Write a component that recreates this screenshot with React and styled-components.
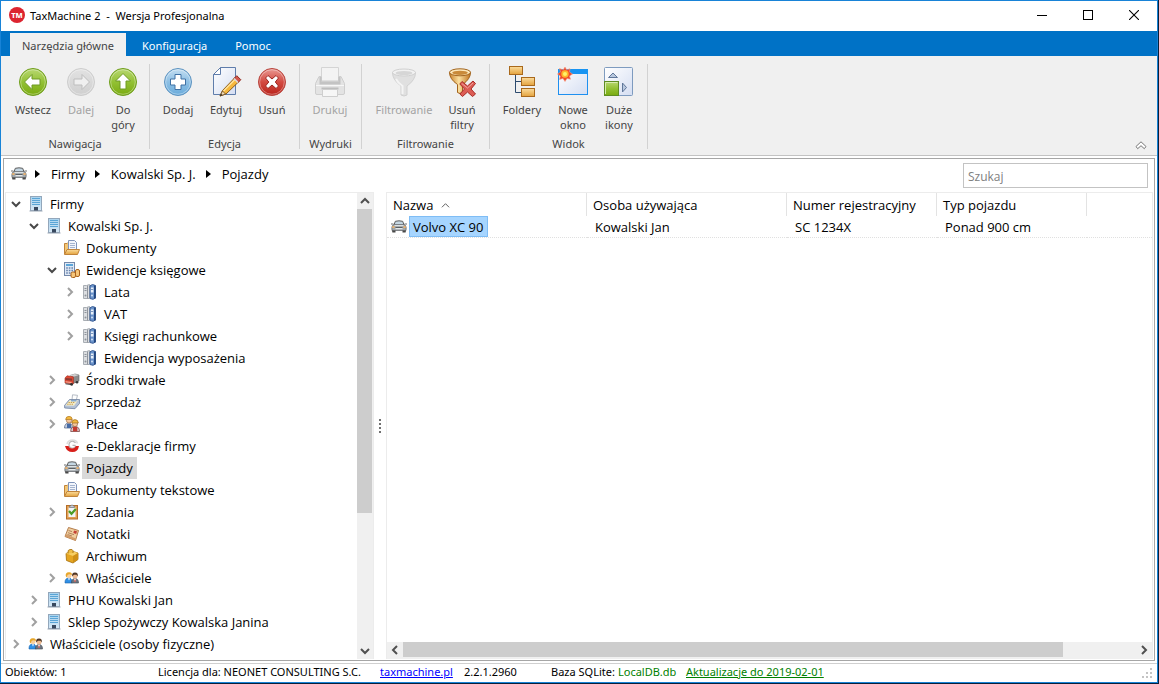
import React, { useState } from 'react'
import styled, { createGlobalStyle } from 'styled-components'

/* ---------- large ribbon icons ---------- */

const IconDefs = () => (
    <DefsSvg aria-hidden="true">
        <defs>
            <linearGradient id="green" x1="0" y1="0" x2="0" y2="1">
                <stop offset="0" stopColor="#b9d873" /><stop offset=".5" stopColor="#93c134" /><stop offset="1" stopColor="#79aa10" />
            </linearGradient>
            <linearGradient id="gray" x1="0" y1="0" x2="0" y2="1">
                <stop offset="0" stopColor="#e2e2e2" /><stop offset="1" stopColor="#cfcfcf" />
            </linearGradient>
            <linearGradient id="blue" x1="0" y1="0" x2="0" y2="1">
                <stop offset="0" stopColor="#c4def1" /><stop offset=".5" stopColor="#8dbfe4" /><stop offset="1" stopColor="#69abdb" />
            </linearGradient>
            <linearGradient id="red" x1="0" y1="0" x2="0" y2="1">
                <stop offset="0" stopColor="#ea9a93" /><stop offset=".5" stopColor="#d34a41" /><stop offset="1" stopColor="#b9231b" />
            </linearGradient>
            <linearGradient id="paper" x1="0" y1="0" x2="1" y2="1">
                <stop offset="0" stopColor="#ffffff" /><stop offset="1" stopColor="#d5def2" />
            </linearGradient>
            <linearGradient id="gold" x1="0" y1="0" x2="1" y2="0">
                <stop offset="0" stopColor="#c9822c" /><stop offset=".45" stopColor="#fbe0a0" /><stop offset="1" stopColor="#c17420" />
            </linearGradient>
            <linearGradient id="box" x1="0" y1="0" x2="0" y2="1">
                <stop offset="0" stopColor="#fbdc9c" /><stop offset="1" stopColor="#e3a23d" />
            </linearGradient>
            <linearGradient id="tower" x1="0" y1="0" x2="0" y2="1">
                <stop offset="0" stopColor="#a9d3ef" /><stop offset="1" stopColor="#d7e8f5" />
            </linearGradient>
        </defs>
    </DefsSvg>
)

const Ball = ({ fill, edge, children }) => (
    <svg width="32" height="32" viewBox="0 0 32 32">
        <circle cx="16" cy="16" r="13.5" fill={`url(#${fill})`} stroke={edge} />
        <circle cx="16" cy="16" r="12.3" fill="none" stroke="#fff" strokeOpacity=".35" />
        {children}
    </svg>
)

const arrowPath = 'M7.5 16 L15 8.5 V13 H23 V19 H15 V23.5 Z'

const BackIcon = () => <Ball fill="green" edge="#6f9e1c"><path d={arrowPath} fill="#fff" stroke="#6f9a25" /></Ball>
const ForwardIcon = () => <Ball fill="gray" edge="#cdcdcd"><path d={arrowPath} transform="rotate(180 16 16)" fill="#efefef" stroke="#bdbdbd" /></Ball>
const UpIcon = () => <Ball fill="green" edge="#6f9e1c"><path d={arrowPath} transform="rotate(90 16 16)" fill="#fff" stroke="#6f9a25" /></Ball>
const AddIcon = () => (
    <Ball fill="blue" edge="#5d93c0">
        <path d="M13 8.500 H19 V13 H23.500 V19 H19 V23.500 H13 V19 H8.500 V13 H13 Z" fill="#fff" stroke="#3f71a4" />
    </Ball>
)
const RemoveIcon = () => (
    <Ball fill="red" edge="#b8453d">
        <path d="M12 9.500 L16 13 L20 9.500 L22.500 12 L19.300 16 L22.500 20 L20 22.500 L16 19 L12 22.500 L9.500 20 L12.800 16 L9.500 12 Z" fill="#fff" stroke="#9c2620" />
    </Ball>
)
const EditIcon = () => (
    <svg width="32" height="32" viewBox="0 0 32 32">
        <path d="M10.500 1.500 H25.500 V28.500 H3.500 V8.500 Z" fill="url(#paper)" stroke="#5f7dab" />
        <path d="M3.500 8.500 H10.500 V1.500 Z" fill="#fff" stroke="#5f7dab" />
        <path d="M10 30 L12.500 24.500 L25 11.500 L29 15.500 L16 28 Z" fill="#f6b73c" stroke="#8b5a1a" />
        <path d="M13.500 25 L26 12.500" stroke="#ffe49c" strokeWidth="1.500" />
        <path d="M24 12.500 L26.800 9.700 L30.800 13.700 L28 16.500 Z" fill="#d4574b" stroke="#8e2b22" />
        <path d="M24 12.500 L28 16.500" stroke="#dfe3ea" strokeWidth="1.500" />
        <path d="M10 30 L12.500 25 L15.500 28 Z" fill="#f3dcb6" stroke="#6b4b22" strokeWidth=".8" />
        <path d="M10 30 L11 27.800 L12.300 29 Z" fill="#222" />
    </svg>
)
const PrinterIcon = () => (
    <svg width="32" height="32" viewBox="0 0 32 32">
        <path d="M7.500 14 V1.500 H24.500 V14" fill="#f3f3f3" stroke="#d4d4d4" />
        <path d="M5 10.500 H7.500 V15 H24.500 V10.500 H27 L30.500 17.500 V27 Q30.500 28.500 29 28.500 H3 Q1.500 28.500 1.500 27 V17.500 Z" fill="#e3e3e3" stroke="#cecece" />
        <path d="M5.500 11 H7.500 V15.500 H24.500 V11 H26.500 V18.500 H5.500 Z" fill="#c3c3c3" />
        <path d="M2 19.500 H30" stroke="#f7f7f7" />
        <path d="M7.500 22.500 H24.500" stroke="#bdbdbd" strokeWidth="2" />
        <path d="M8.500 23.500 H23.500 V30.500 H8.500 Z" fill="#f6f6f6" stroke="#cecece" />
    </svg>
)
const FunnelIcon = () => (
    <svg width="32" height="32" viewBox="0 0 32 32">
        <path d="M4.500 6.500 Q4.500 14 13 20 V29 Q16 31 19 29 V20 Q27.500 14 27.500 6.500 Z" fill="#e0e0e0" stroke="#d0d0d0" />
        <path d="M8 13 Q10 17 14.500 20 V28" stroke="#f4f4f4" strokeWidth="2" fill="none" />
        <ellipse cx="16" cy="6.500" rx="11.500" ry="3.500" fill="#f2f2f2" stroke="#d0d0d0" />
        <ellipse cx="16" cy="7" rx="8.500" ry="2" fill="#d6d6d6" />
    </svg>
)
const ClearFunnelIcon = () => (
    <svg width="32" height="32" viewBox="0 0 32 32">
        <path d="M3.500 6.500 Q3.500 13 11.500 18.500 V26.500 Q14 28.500 16.500 26.500 V18.500 Q24.500 13 24.500 6.500 Z" fill="url(#gold)" stroke="#a2641d" />
        <ellipse cx="14" cy="6.300" rx="10.500" ry="3.500" fill="#fde9bd" stroke="#a2641d" />
        <ellipse cx="14" cy="6.800" rx="7.800" ry="2.100" fill="#c98a3a" />
        <path d="M16 15.500 L21.500 20 L27 15 L29.500 17.500 L25 23 L29.500 28 L26.500 30.500 L21.500 26 L16.500 30.500 L13.800 28 L18.500 23 L13.800 18 Z" fill="#dc5c54" stroke="#a82c27" />
        <path d="M15.800 17.500 L21.500 22 L27 17" fill="none" stroke="#f0a29d" />
    </svg>
)
const FoldersIcon = () => (
    <svg width="32" height="32" viewBox="0 0 32 32">
        <path d="M9.500 9 V26.500 H15 M9.500 15.500 H15" fill="none" stroke="#2d4b6e" />
        <rect x="3.500" y=".5" width="13" height="8" fill="url(#box)" stroke="#a9691c" />
        <rect x="15.500" y="11.500" width="13" height="8" fill="url(#box)" stroke="#a9691c" />
        <rect x="15.500" y="22.500" width="13" height="8" fill="url(#box)" stroke="#a9691c" />
    </svg>
)
const NewWindowIcon = () => (
    <svg width="32" height="32" viewBox="0 0 32 32">
        <rect x="1.500" y="3.500" width="29" height="25" fill="url(#paper)" stroke="#1e90f0" />
        <rect x="1" y="3" width="30" height="5" fill="#1894f2" />
        <path d="M8 1 L9.700 4 L13 2.700 L12.500 6 L15.500 8 L12.500 10 L13.500 13.200 L10 12.500 L8 15.500 L6 12.500 L2.500 13.500 L3.300 10 L.5 8 L3.500 6 L2.500 2.500 L6.200 4 Z" fill="#f0482c" stroke="#f59a80" strokeWidth=".6" />
        <circle cx="8" cy="8" r="3.700" fill="#ffb52c" /><circle cx="8" cy="8" r="2" fill="#fff36a" />
    </svg>
)
const LargeIconsIcon = () => (
    <svg width="32" height="32" viewBox="0 0 32 32">
        <rect x="1.500" y="1.500" width="28" height="28" rx="1" fill="url(#paper)" stroke="#7e9bbf" />
        <path d="M5.500 11.500 H14.500 L10 7 Z" fill="#b9c8de" stroke="#60789b" />
        <path d="M19.500 17 V26 L23.500 21.500 Z" fill="#b9c8de" stroke="#60789b" />
        <rect x="1.500" y="15.500" width="14" height="14" fill="url(#green)" stroke="#5f8d22" />
        <path d="M2.500 28 V16.500 H14.500" fill="none" stroke="#d8ecaf" />
    </svg>
)

/* ---------- small 16px icons ---------- */

const Small = ({ children }) => <svg width="16" height="16" viewBox="0 0 16 16">{children}</svg>

const CarIcon = () => (
    <Small>
        <path d="M3 6 L4.300 2.300 Q8 1.300 11.700 2.300 L13 6" fill="#c4d6e2" stroke="#5c5c5c" />
        <path d="M0 5 H2.500 M13.500 5 H16" stroke="#6c6c6c" />
        <path d="M1.500 6.500 L3 5.500 H13 L14.500 6.500 Q15.500 8 15 11.500 H1 Q.5 8 1.500 6.500 Z" fill="#a2a8ac" stroke="#6c7074" strokeWidth=".8" />
        <path d="M3.500 6.600 H12.500" stroke="#e4e8ea" />
        <path d="M1.300 8 H3.500 M12.500 8 H14.700" stroke="#ffb45c" strokeWidth="1.600" />
        <path d="M4.500 8.500 H11.500" stroke="#5a5f63" />
        <path d="M4.500 9.700 H11.500" stroke="#f4f5f6" />
        <path d="M1 11.500 H4.500 V13.500 H1.400 Z M11.500 11.500 H15 L14.600 13.500 H11.500 Z" fill="#484848" />
    </Small>
)
const BuildingIcon = () => (
    <Small>
        <rect x="2.500" y=".5" width="11" height="14" fill="url(#tower)" stroke="#93a7bb" />
        <path d="M4 2.500 H12 M4 4.500 H12 M4 6.500 H12 M4 8.500 H12" stroke="#5aa5d6" />
        <rect x="6" y="11" width="4" height="4" fill="#38495f" />
        <path d="M1.500 15 H14.500" stroke="#98a5b4" />
    </Small>
)
const FolderIcon = () => (
    <Small>
        <path d="M.5 14 V3.500 H3 L4 2.500 H6.500 V12" fill="#f3c777" stroke="#c1843a" />
        <path d="M4.500 .5 H10.500 L12.500 2.500 V12 H4.500 Z" fill="#f2f5fb" stroke="#7f94bb" />
        <path d="M6 3.500 H11 M6 5.500 H11 M6 7.500 H11" stroke="#a5b4cf" />
        <path d="M.5 14.500 L3 9.500 H15.500 L13.500 14.500 Z" fill="url(#box)" stroke="#c1843a" />
    </Small>
)
const LedgerIcon = () => (
    <Small>
        <rect x=".5" y=".5" width="10" height="13" fill="#e0e9f5" stroke="#7489aa" />
        <rect x="2" y="2" width="7" height="2" fill="#5ba6da" />
        <path d="M2.200 6 H9 M2.200 8.500 H9 M2.200 11 H9" stroke="#6884ad" strokeWidth="1.400" strokeDasharray="1.600 1" />
        <rect x="7" y="10" width="4.500" height="5.500" rx="1.500" fill="#f6c67a" stroke="#a8611b" />
        <rect x="11.500" y="7.500" width="4" height="7" rx="1.500" fill="#f6c67a" stroke="#a8611b" />
    </Small>
)
const BindersIcon = () => (
    <Small>
        <path d="M1.500 1.500 H4.500 L7.500 .5 V14.500 L1.500 14.500 Z" fill="#dcdee1" stroke="#a9aeb4" />
        <path d="M5.500 1.500 V14.500" stroke="#90959c" />
        <path d="M2.500 4.500 H4.500 M2.500 6.500 H4.500" stroke="#8f959c" />
        <path d="M8 1.800 L10.500 .5 L13.500 1.500 V14 L11 15.300 L8 14.500 Z" fill="#6a93cb" stroke="#3a5e96" />
        <path d="M12.800 1.500 V14.500" stroke="#24477f" strokeWidth="1.600" />
        <rect x="8.800" y="3.500" width="2.700" height="5" fill="#eaf1f9" />
        <path d="M9 5.500 H11.300" stroke="#7b97bf" />
        <circle cx="10" cy="11.500" r="1" fill="#d5e3f3" /><circle cx="3.500" cy="11.500" r="1" fill="#8f959c" />
    </Small>
)
const TruckIcon = () => (
    <Small>
        <path d="M6 3.500 L11 2 L15 3 V9 L9 11.500 V5 Z" fill="#8b8b8b" stroke="#666" strokeWidth=".6" />
        <path d="M5 3.500 L10.500 2 L15 3 L9.500 4.800 Z" fill="#d0d0d0" />
        <path d="M1 6 L3 3.800 L9.300 4.800 V12 L1 11 Z" fill="#e04a35" stroke="#a5281a" strokeWidth=".6" />
        <path d="M1.500 6 L8 6.500 V8.700 L1.500 8 Z" fill="#8b3a32" />
        <path d="M1.500 9.800 L7.500 10.500" stroke="#f9b39f" />
        <path d="M1.500 11.800 L9 12.800" stroke="#444" />
        <circle cx="7.500" cy="12.300" r="1.400" fill="#333" /><circle cx="13" cy="10.300" r="1.300" fill="#333" />
    </Small>
)
const CashIcon = () => (
    <Small>
        <path d="M8 6 L8.500 .8 L13.500 1.300 L12 7 Z" fill="#fff" stroke="#a3abb6" strokeWidth=".8" />
        <path d="M.5 11.500 L5.500 5.500 L15.500 5.500 V9.500 L11 14.700 L.7 14 Z" fill="#b3c1d6" stroke="#6e819f" strokeWidth=".8" />
        <path d="M1.300 11.500 L5.700 6.200 H14 L10 11.800 Z" fill="#f3eccb" />
        <path d="M4.500 8.500 H10.500 M3.200 10.300 H9.500" stroke="#c9a14e" strokeWidth="1.100" strokeDasharray="1.400 .8" />
        <path d="M7 6.800 H12.500" stroke="#6f9ccf" strokeWidth="1.200" />
    </Small>
)
const WorkersIcon = () => (
    <Small>
        <path d="M.5 12 Q.5 7 5 7 Q8 7 8.500 12 Z" fill="#c5cfe0" stroke="#4d5f83" strokeWidth=".7" />
        <path d="M3 8 V12 H7 V8" fill="#476ba5" />
        <circle cx="5" cy="4.500" r="2.600" fill="#f4c69c" stroke="#8b5a35" strokeWidth=".6" />
        <path d="M1.600 3.500 Q2 .3 5 .3 Q8 .3 8.400 3.500 Z" fill="#f2b83e" stroke="#a76d19" strokeWidth=".6" />
        <path d="M6.700 15.500 Q6.700 10.500 11 10.500 Q15.500 10.500 15.500 15.500 Z" fill="#d9c8cc" stroke="#6b3030" strokeWidth=".7" />
        <path d="M9 11 V15.300 H13.300 V11" fill="#c43a30" />
        <circle cx="11" cy="8" r="2.600" fill="#f4c69c" stroke="#8b5a35" strokeWidth=".6" />
        <path d="M7.600 7 Q8 3.600 11 3.600 Q14 3.600 14.400 7 Z" fill="#f2b83e" stroke="#8b5a19" strokeWidth=".6" />
    </Small>
)
const DeclarationIcon = () => (
    <Small>
        <path d="M3 6 Q4 2 8.500 2 Q12.500 2 13.500 5.500" fill="none" stroke="#dedede" strokeWidth="1.600" />
        <path d="M11.500 5 A3.500 3.500 0 1 0 11.500 8.500 L11 7.300 H8.500" fill="none" stroke="#b5b5b5" strokeWidth="1.200" />
        <path d="M1 8 H4.500 Q5.500 10.500 8 10.500 Q10.800 10.500 12 8 H15 Q14 14 8.500 14 Q2.500 14 1 8 Z" fill="#d8201b" />
    </Small>
)
const TasksIcon = () => (
    <Small>
        <rect x="2.500" y="1.500" width="11" height="13.500" fill="#e2a052" stroke="#b56d28" />
        <path d="M4.500 3.500 H11.500 V13 H4.500 Z" fill="#f2f4f8" />
        <path d="M5.500 3.500 V2 H6.800 Q8 -.5 9.200 2 H10.500 V3.500 Z" fill="#c7ccd4" stroke="#737a85" strokeWidth=".7" />
        <path d="M5 7 L7.500 9.800 L11.800 5" fill="none" stroke="#4c9d25" strokeWidth="2.200" />
    </Small>
)
const NotesIcon = () => (
    <Small>
        <path d="M4.500 1.500 L14.500 4.500 L11.500 14.500 L1 10.500 Z" fill="#f0cfa0" stroke="#ad713c" strokeWidth=".9" />
        <path d="M1 10.500 L11.500 14.500 L12 12.500 L2 8.500 Z" fill="#d39c68" />
        <path d="M4.500 4.500 L8 5.600 M4 6.700 L10 8.700 M3.500 8.500 L8 10" stroke="#a5714a" strokeWidth=".8" />
        <path d="M10 4.500 L13 5.300 L12.200 8 L9.300 7 Z" fill="#c44236" />
    </Small>
)
const BoxIcon = () => (
    <Small>
        <path d="M2 5.500 L7.500 3 L14 5 V11.500 L9 15 L2.500 12.500 Z" fill="#e5a521" stroke="#a36d0a" strokeWidth=".8" />
        <path d="M2 5.500 L7.500 3 L14 5 L9 8 Z" fill="#f7cf63" />
        <path d="M9 8 V14.800 L13.800 11.500 V5.200 Z" fill="#cf9016" />
        <path d="M4 5.500 Q3.500 1.500 6 1.500 L8 1.500 Q9.500 2 9 5" fill="#eebd44" stroke="#a36d0a" strokeWidth=".8" />
    </Small>
)
const OwnersIcon = () => (
    <Small>
        <path d="M1 13 Q.7 8 5 8 Q8 8 8.300 13 Z" fill="#2f8fe6" stroke="#1761a9" strokeWidth=".6" />
        <path d="M4 8.300 L5 10.500 L6 8.300 Z" fill="#fff" />
        <circle cx="5" cy="5.500" r="2.500" fill="#f6cf9f" />
        <path d="M1.700 6 Q1.500 2 5 2.300 Q8 2 8 5 Q5 3.500 3.500 5 L2.700 7.500 Z" fill="#e7a62a" />
        <path d="M7.500 13 Q7.500 8.500 11 8.500 Q14.500 8.500 14.500 13 Z" fill="#6d7581" stroke="#40464f" strokeWidth=".6" />
        <path d="M9.800 8.700 L11 12.500 L12.200 8.700 Z" fill="#fff" /><path d="M11 9.500 V12" stroke="#c52f25" />
        <circle cx="11" cy="6" r="2.500" fill="#edba91" />
        <path d="M8.200 6.500 Q7.500 2.500 11 2.500 Q14.500 2.500 13.700 6.500 L12.500 4.800 H10 Z" fill="#4f3524" />
    </Small>
)

const Chevron = ({ dir, color = '#505050', size = 10, weight = 2 }) => {
    const paths = { down: 'M1 3 L5 7 L9 3', up: 'M1 7 L5 3 L9 7', right: 'M3 1 L7 5 L3 9', left: 'M7 1 L3 5 L7 9' }
    return (
        <svg width={size} height={size} viewBox="0 0 10 10">
            <path d={paths[dir]} fill="none" stroke={color} strokeWidth={weight} />
        </svg>
    )
}

/* ---------- data ---------- */

const ribbon = [
    {
        name: 'Nawigacja', width: 148, items: [
            { label: 'Wstecz', icon: BackIcon, width: 56 },
            { label: 'Dalej', icon: ForwardIcon, width: 40, disabled: true },
            { label: 'Do góry', icon: UpIcon, width: 44 },
        ]
    },
    {
        name: 'Edycja', width: 149, items: [
            { label: 'Dodaj', icon: AddIcon, width: 48 },
            { label: 'Edytuj', icon: EditIcon, width: 48 },
            { label: 'Usuń', icon: RemoveIcon, width: 44 },
        ]
    },
    { name: 'Wydruki', width: 61, items: [{ label: 'Drukuj', icon: PrinterIcon, width: 52, disabled: true }] },
    {
        name: 'Filtrowanie', width: 127, items: [
            { label: 'Filtrowanie', icon: FunnelIcon, width: 76, disabled: true },
            { label: 'Usuń filtry', icon: ClearFunnelIcon, width: 40 },
        ]
    },
    {
        name: 'Widok', width: 157, items: [
            { label: 'Foldery', icon: FoldersIcon, width: 56 },
            { label: 'Nowe okno', icon: NewWindowIcon, width: 46 },
            { label: 'Duże ikony', icon: LargeIconsIcon, width: 46 },
        ]
    },
]

const tree = [
    { label: 'Firmy', depth: 0, icon: BuildingIcon, state: 'open' },
    { label: 'Kowalski Sp. J.', depth: 1, icon: BuildingIcon, state: 'open' },
    { label: 'Dokumenty', depth: 2, icon: FolderIcon },
    { label: 'Ewidencje księgowe', depth: 2, icon: LedgerIcon, state: 'open' },
    { label: 'Lata', depth: 3, icon: BindersIcon, state: 'closed' },
    { label: 'VAT', depth: 3, icon: BindersIcon, state: 'closed' },
    { label: 'Księgi rachunkowe', depth: 3, icon: BindersIcon, state: 'closed' },
    { label: 'Ewidencja wyposażenia', depth: 3, icon: BindersIcon },
    { label: 'Środki trwałe', depth: 2, icon: TruckIcon, state: 'closed' },
    { label: 'Sprzedaż', depth: 2, icon: CashIcon, state: 'closed' },
    { label: 'Płace', depth: 2, icon: WorkersIcon, state: 'closed' },
    { label: 'e-Deklaracje firmy', depth: 2, icon: DeclarationIcon },
    { label: 'Pojazdy', depth: 2, icon: CarIcon },
    { label: 'Dokumenty tekstowe', depth: 2, icon: FolderIcon },
    { label: 'Zadania', depth: 2, icon: TasksIcon, state: 'closed' },
    { label: 'Notatki', depth: 2, icon: NotesIcon },
    { label: 'Archiwum', depth: 2, icon: BoxIcon },
    { label: 'Właściciele', depth: 2, icon: OwnersIcon, state: 'closed' },
    { label: 'PHU Kowalski Jan', depth: 1, icon: BuildingIcon, state: 'closed' },
    { label: 'Sklep Spożywczy Kowalska Janina', depth: 1, icon: BuildingIcon, state: 'closed' },
    { label: 'Właściciele (osoby fizyczne)', depth: 0, icon: OwnersIcon, state: 'closed' },
]

const tabs = ['Narzędzia główne', 'Konfiguracja', 'Pomoc']
const path = ['Firmy', 'Kowalski Sp. J.', 'Pojazdy']

const App = () => {
    const [tab, setTab] = useState(tabs[0])
    const [selected, setSelected] = useState('Pojazdy')
    const [query, setQuery] = useState('')

    const renderTree = () => {
        return tree.map((node) => {
            const Icon = node.icon
            return <TreeRow key={node.label} $depth={node.depth}>
                <Toggle>
                    {node.state && <button aria-label={node.label}>
                        <Chevron dir={node.state === 'open' ? 'down' : 'right'} color={node.state === 'open' ? '#484848' : '#a0a0a0'} />
                    </button>}
                </Toggle>
                <Icon />
                <TreeLabel $selected={node.label === selected} onClick={() => setSelected(node.label)}>{node.label}</TreeLabel>
            </TreeRow>
        })
    }

    return (
        <Desktop>
            <GlobalStyle />
            <IconDefs />
            <Window>
                <TitleBar>
                    <Logo viewBox="0 0 16 16">
                        <circle cx="8" cy="8" r="8" fill="#dc2430" />
                        <text x="8" y="10.500" textAnchor="middle" fontSize="7.500" fontWeight="800" fill="#fff">TM</text>
                    </Logo>
                    <Title>TaxMachine 2&nbsp; -&nbsp; Wersja Profesjonalna</Title>
                    <WindowButton aria-label="Minimalizuj">
                        <svg width="10" height="10"><path d="M0 5.500 H10" stroke="#000" /></svg>
                    </WindowButton>
                    <WindowButton aria-label="Maksymalizuj">
                        <svg width="10" height="10"><rect x=".5" y=".5" width="9" height="9" fill="none" stroke="#000" /></svg>
                    </WindowButton>
                    <WindowButton aria-label="Zamknij">
                        <svg width="10" height="10"><path d="M0 0 L10 10 M10 0 L0 10" stroke="#000" strokeWidth="1.100" /></svg>
                    </WindowButton>
                </TitleBar>

                <TabBar>
                    {tabs.map((name) => (
                        <Tab key={name} $active={name === tab} onClick={() => setTab(name)}>{name}</Tab>
                    ))}
                </TabBar>

                <Ribbon>
                    {ribbon.map((group) => (
                        <React.Fragment key={group.name}>
                            <Group $width={group.width}>
                                <Tools>
                                    {group.items.map(({ label, icon: Icon, width, disabled }) => (
                                        <Tool key={label} $width={width} disabled={disabled}>
                                            <Icon />
                                            <span>{label}</span>
                                        </Tool>
                                    ))}
                                </Tools>
                                <GroupName>{group.name}</GroupName>
                            </Group>
                            <Separator />
                        </React.Fragment>
                    ))}
                    <Collapse aria-label="Zwiń wstążkę">
                        <svg width="12" height="9" viewBox="0 0 12 9">
                            <path d="M1 5.500 L6 .8 L11 5.500 L9.300 7.700 L6 4.700 L2.700 7.700 Z" fill="#fff" stroke="#777" />
                        </svg>
                    </Collapse>
                </Ribbon>

                <Panel>
                    <PathBar>
                        <CarIcon />
                        {path.map((step) => (
                            <React.Fragment key={step}>
                                <StepArrow viewBox="0 0 5 8"><path d="M0 0 L5 4 L0 8 Z" /></StepArrow>
                                <Step>{step}</Step>
                            </React.Fragment>
                        ))}
                        <Search placeholder="Szukaj" aria-label="Szukaj" value={query} onChange={(e) => setQuery(e.target.value)} />
                    </PathBar>

                    <Content>
                        <TreePane>
                            <TreeList>{renderTree()}</TreeList>
                            <VerticalBar>
                                <BarButton aria-label="W górę"><Chevron dir="up" /></BarButton>
                                <VerticalTrack><VerticalThumb /></VerticalTrack>
                                <BarButton aria-label="W dół"><Chevron dir="down" /></BarButton>
                            </VerticalBar>
                        </TreePane>
                        <Splitter><i /><i /><i /><i /></Splitter>
                        <ListPane>
                            <Table>
                                <colgroup>
                                    <Col $width={200} /><Col $width={200} /><Col $width={150} /><Col $width={150} /><col />
                                </colgroup>
                                <thead>
                                    <tr>
                                        <th>Nazwa <Chevron dir="up" size={9} weight={1} /></th>
                                        <th>Osoba używająca</th>
                                        <th>Numer rejestracyjny</th>
                                        <th>Typ pojazdu</th>
                                        <th aria-label="Puste" />
                                    </tr>
                                </thead>
                                <tbody>
                                    <tr>
                                        <td><NameCell><CarIcon /><Picked>Volvo XC 90</Picked></NameCell></td>
                                        <td>Kowalski Jan</td>
                                        <td>SC 1234X</td>
                                        <td>Ponad 900 cm</td>
                                        <td />
                                    </tr>
                                </tbody>
                            </Table>
                            <HorizontalBar>
                                <BarButton aria-label="W lewo"><Chevron dir="left" /></BarButton>
                                <HorizontalTrack><HorizontalThumb /></HorizontalTrack>
                                <BarButton aria-label="W prawo"><Chevron dir="right" /></BarButton>
                            </HorizontalBar>
                        </ListPane>
                    </Content>
                </Panel>

                <StatusBar>
                    <StatusText $width={153}>Obiektów: 1</StatusText>
                    <StatusText $width={222}>Licencja dla: NEONET CONSULTING S.C.</StatusText>
                    <StatusText $width={84}><a href="#taxmachine">taxmachine.pl</a></StatusText>
                    <StatusText $width={87}>2.2.1.2960</StatusText>
                    <StatusText $width={67}>Baza SQLite:</StatusText>
                    <StatusText $width={68} $green>LocalDB.db</StatusText>
                    <StatusText $green><a href="#aktualizacje">Aktualizacje do 2019-02-01</a></StatusText>
                    <Grip viewBox="0 0 12 12">
                        <path d="M8 0h2v2h-2z M8 4h2v2h-2z M4 4h2v2h-2z M0 8h2v2h-2z M4 8h2v2h-2z M8 8h2v2h-2z" fill="#c4c4c4" />
                    </Grip>
                </StatusBar>
            </Window>
        </Desktop>
    )
}

const GlobalStyle = createGlobalStyle`
    * {
        box-sizing: border-box;
    }

    body {
        margin: 0;
        background: #fff;
        font-family: "Noto Sans", "Open Sans", sans-serif;
        font-size: 11px;
        color: #000;
    }

    button {
        display: flex;
        align-items: center;
        justify-content: center;
        border: 0;
        padding: 0;
        background: none;
        font: inherit;
        color: inherit;
    }

    svg {
        display: block;
        flex: none;
    }
`

const DefsSvg = styled.svg`
    position: absolute;
    width: 0;
    height: 0;
`

const Desktop = styled.div`
    display: flex;
    height: 100vh;
    border: 0 solid #06203c;
    border-width: 0 1px 1px 0;
`

const Window = styled.div`
    flex: 1;
    min-width: 0;
    display: flex;
    flex-direction: column;
    border: 1px solid #1883d7;
`

const TitleBar = styled.header`
    display: flex;
    align-items: center;
    height: 30px;
    padding: 0 0 2px 8px;
`

const Logo = styled.svg`
    width: 16px;
    height: 16px;
`

const Title = styled.h1`
    flex: 1;
    margin: 0 0 0 5px;
    font-size: 11px;
    font-weight: 400;
`

const WindowButton = styled.button`
    width: 46px;
    height: 28px;
`

const TabBar = styled.nav`
    display: flex;
    gap: 4px;
    height: 25px;
    padding: 2px 0 0 9px;
    background: #0072c6;
`

const Tab = styled.button`
    padding: 2px 12px 0;
    color: ${(p) => (p.$active ? '#444' : '#fff')};
    background: ${(p) => (p.$active ? '#f0f0f0' : 'transparent')};
`

const Ribbon = styled.div`
    display: flex;
    height: 100px;
    padding-top: 8px;
    background: #f0f0f0;
    border-bottom: 1px solid #c3c3c3;
    color: #444;
`

const Group = styled.section`
    width: ${(p) => p.$width}px;
    padding: 2px 4px 0;
`

const Tools = styled.div`
    display: flex;
    height: 70px;
`

const Tool = styled.button`
    flex-direction: column;
    justify-content: flex-start;
    width: ${(p) => p.$width}px;
    line-height: 15px;

    span {
        margin-top: 4px;
        padding: 0 4px;
    }

    &:disabled {
        color: #a3a3a3;
    }
`

const GroupName = styled.div`
    text-align: center;
    line-height: 15px;
`

const Separator = styled.div`
    width: 1px;
    height: 85px;
    background: #d2d2d2;
`

const Collapse = styled.button`
    align-self: flex-end;
    margin: 0 10px 5px auto;
`

const Panel = styled.main`
    flex: 1;
    min-height: 0;
    display: flex;
    flex-direction: column;
    margin: 2px;
    padding: 0 1px 1px;
    border: 1px solid #a6a6a6;
    font-family: "Open Sans", "Noto Sans", sans-serif;
    font-size: 13px;
`

const PathBar = styled.div`
    display: flex;
    align-items: center;
    height: 33px;
    padding: 0 5px 3px 6px;
`

const StepArrow = styled.svg`
    width: 5px;
    height: 8px;
    margin: 0 11px 0 8px;

    /* every arrow but the first follows a text */
    span + & {
        margin-left: 10px;
    }
`

const Step = styled.span`
    line-height: 22px;
`

const Search = styled.input`
    width: 185px;
    height: 25px;
    margin: 3px 0 0 auto;
    padding: 2px 4px 0;
    border: 1px solid #c3c3c3;
    font: inherit;
    font-size: 12px;
    outline: 0;

    &::placeholder {
        color: #808080;
    }
`

const Content = styled.div`
    flex: 1;
    min-height: 0;
    display: flex;
`

const TreePane = styled.aside`
    display: flex;
    width: 369px;
    border: 1px solid #ececec;
    border-width: 1px 1px 0;
`

const TreeList = styled.ul`
    flex: 1;
    margin: 0;
    padding: 0;
    list-style: none;
    overflow: hidden;
`

const TreeRow = styled.li`
    display: flex;
    align-items: center;
    height: 22px;
    padding-left: ${(p) => p.$depth * 18}px;
`

const Toggle = styled.span`
    display: flex;
    width: 22px;
    padding-left: 5px;
`

const TreeLabel = styled.button`
    height: 22px;
    margin-left: 2px;
    padding: 0 4px;
    background: ${(p) => (p.$selected ? '#d9d9d9' : 'transparent')};
`

const VerticalBar = styled.div`
    display: flex;
    flex-direction: column;
    width: 16px;
    background: #f0f0f0;
`

const BarButton = styled.button`
    flex: none;
    width: 16px;
    height: 16px;
`

const VerticalTrack = styled.div`
    flex: 1;
`

const VerticalThumb = styled.div`
    width: 15px;
    height: 70%;
    background: #cdcdcd;
`

const Splitter = styled.div`
    display: flex;
    flex-direction: column;
    align-items: center;
    justify-content: center;
    gap: 2px;
    width: 12px;

    i {
        width: 2px;
        height: 2px;
        background: #707070;
    }
`

const ListPane = styled.section`
    flex: 1;
    min-width: 0;
    display: flex;
    flex-direction: column;
    justify-content: space-between;
    border: 1px solid #ececec;
    border-bottom: 0;
`

const Table = styled.table`
    width: 100%;
    table-layout: fixed;
    border-spacing: 0;

    th {
        height: 23px;
        padding: 1px 6px 0;
        border-right: 1px solid #e3e3e3;
        font-weight: 400;
        text-align: left;
    }

    th:last-child {
        border-right: 0;
    }

    th svg {
        display: inline-block;
        margin-left: 4px;
    }

    td {
        height: 22px;
        padding: 1px 8px 0;
        border-bottom: 1px dotted #e0e0e0;
    }

    td:first-child {
        padding: 0 4px;
    }
`

const Col = styled.col`
    width: ${(p) => p.$width}px;
`

const NameCell = styled.div`
    display: flex;
    align-items: center;
    gap: 2px;
`

const Picked = styled.span`
    height: 21px;
    padding: 0 4px 0 3px;
    border: 1px solid #7fbdf5;
    background: #a6d5ff;
    line-height: 20px;
`

const HorizontalBar = styled.div`
    display: flex;
    height: 17px;
    background: #f0f0f0;
`

const HorizontalTrack = styled.div`
    flex: 1;
`

const HorizontalThumb = styled.div`
    width: 90%;
    height: 15px;
    background: #cdcdcd;
`

const StatusBar = styled.footer`
    display: flex;
    align-items: center;
    height: 19px;
    padding: 0 0 3px 4px;
    border-top: 1px solid #d0d0d0;
    white-space: nowrap;
`

const StatusText = styled.span`
    width: ${(p) => (p.$width ? `${p.$width}px` : 'auto')};
    color: ${(p) => (p.$green ? '#008000' : '#000')};

    a {
        color: ${(p) => (p.$green ? '#008000' : '#0000ff')};
    }
`

const Grip = styled.svg`
    width: 12px;
    height: 12px;
    margin: 4px 3px 0 auto;
`

export default App
